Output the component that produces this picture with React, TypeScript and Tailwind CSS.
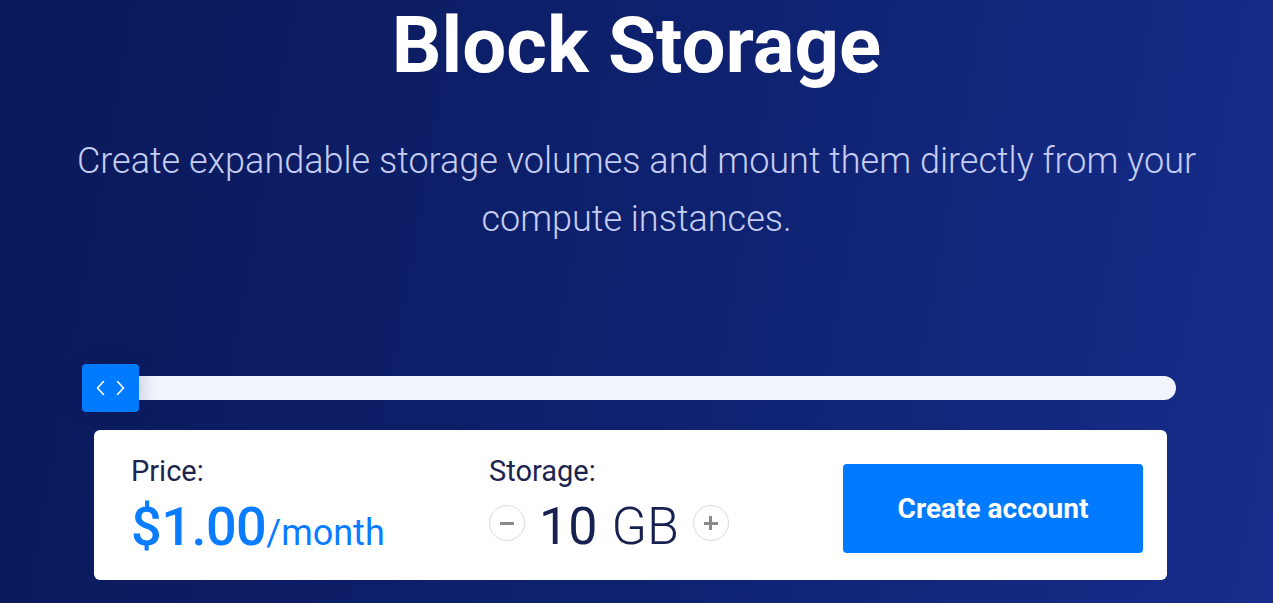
import React from "react";

export default function App() {
  return (
    <div
      className="w-[1273px] h-[603px] overflow-hidden bg-[linear-gradient(100deg,#0a195a_0%,#0e216e_50%,#162d8b_100%)] flex flex-col items-center"
      style={{ fontFamily: "Roboto, 'Noto Sans', sans-serif" }}
    >
      <h1 className="mt-[7px] text-[78px] leading-[78px] font-bold text-white">
        Block Storage
      </h1>
      <p className="mt-[47px] w-[1140px] text-center text-[36px] leading-[58px] font-light text-[#c6cdf0]">
        Create expandable storage volumes and mount them directly from your compute instances.
      </p>

      {/* slider */}
      <div className="mt-[116px] w-[1094px] ml-[-15px] relative h-[48px] flex items-center">
        <div className="ml-[15px] flex-1 h-[24px] rounded-full bg-[#f1f4fd]" />
        <div className="absolute left-0 top-0 w-[57px] h-[48px] rounded-[4px] bg-[#007bff] flex items-center justify-center gap-[11px] shadow-[0_0_18px_rgba(10,20,80,0.25)]">
          <svg width="9" height="16" viewBox="0 0 9 16" fill="none">
            <path d="M7.5 1.5L1.5 8L7.5 14.5" stroke="white" strokeWidth="1.6" strokeLinecap="round" strokeLinejoin="round" />
          </svg>
          <svg width="9" height="16" viewBox="0 0 9 16" fill="none">
            <path d="M1.5 1.5L7.5 8L1.5 14.5" stroke="white" strokeWidth="1.6" strokeLinecap="round" strokeLinejoin="round" />
          </svg>
        </div>
      </div>

      {/* card */}
      <div className="mt-[18px] mr-[12px] w-[1073px] h-[150px] bg-white rounded-[6px] flex items-start pt-[25px] pl-[37px] pr-[24px]">
        <div className="w-[358px] flex flex-col">
          <div className="text-[29px] leading-[32px] text-[#1b2550]">Price:</div>
          <div className="mt-[13px] flex items-baseline text-[#0a7cff]">
            <span className="text-[54px] leading-[54px] font-medium tracking-[-0.5px]">$1.00</span>
            <span className="text-[36px] leading-[54px]">/month</span>
          </div>
        </div>
        <div className="flex flex-col">
          <div className="text-[29px] leading-[32px] text-[#1b2550]">Storage:</div>
          <div className="mt-[13px] flex items-center h-[54px] text-[#172150]">
            <button className="w-[36px] h-[36px] rounded-full border border-[#d9d9e6] flex items-center justify-center -mt-[8px]">
              <span className="block w-[14px] h-[3px] bg-[#8a8a8a]" />
            </button>
            <span className="ml-[14px] text-[52px] leading-[54px] font-normal">10</span>
            <span className="ml-[14px] text-[52px] leading-[54px] font-light">GB</span>
            <button className="ml-[14px] w-[36px] h-[36px] rounded-full border border-[#d9d9e6] flex items-center justify-center relative -mt-[8px]">
              <span className="block w-[14px] h-[3px] bg-[#8a8a8a]" />
              <span className="absolute block w-[3px] h-[14px] bg-[#8a8a8a]" />
            </button>
          </div>
        </div>
        <button className="ml-auto mt-[9px] w-[300px] h-[89px] rounded-[4px] bg-[#007bff] text-white text-[28px] font-bold">
          Create account
        </button>
      </div>
    </div>
  );
}
